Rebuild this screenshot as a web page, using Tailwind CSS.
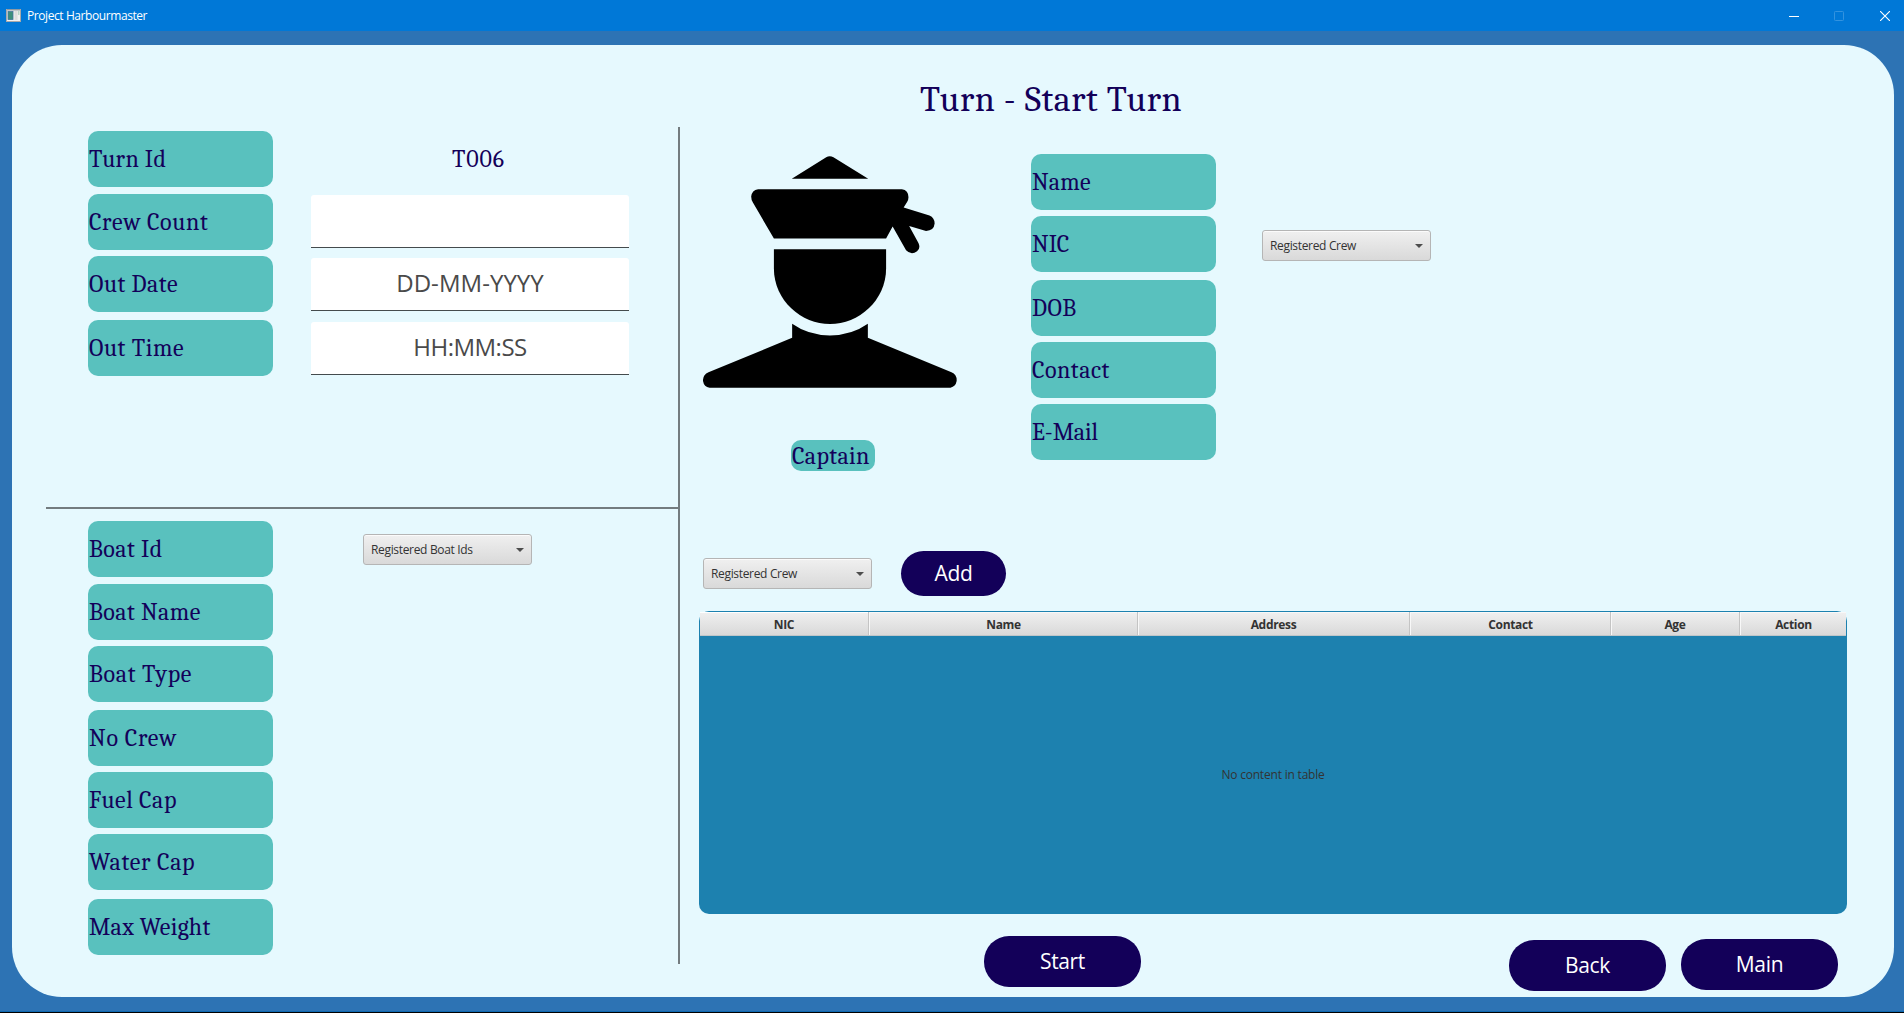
<!DOCTYPE html>
<html lang="en">
<head>
<meta charset="utf-8">
<title>Project Harbourmaster</title>
<script src="https://cdn.jsdelivr.net/npm/@tailwindcss/browser@4"></script>
</head>
<body class="w-[1904px] h-[1013px] overflow-hidden bg-black font-['Open_Sans',sans-serif] text-[#130059]">
<div class="h-[1012px] flex flex-col bg-[#2d73b4] border-b border-[#0f68b0]">
  <header class="h-[31px] shrink-0 bg-[#0078d7] flex items-center text-white">
    <svg class="ml-[6px] w-[15px] h-[13px]" viewBox="0 0 15 13"><rect x=".5" y=".5" width="14" height="12" fill="#f1f1f1" stroke="#a9a9a9"/><rect x="1" y="0" width="13" height="1.5" fill="#8f9aa3"/><rect x="2" y="2.5" width="5" height="8" fill="#3c8f7c" stroke="#44749b" stroke-width=".8"/><rect x="8.500" y="2" width="3" height="9" fill="#dedede"/><rect x="12" y="2" width="1.500" height="4" fill="#b9d6c6"/></svg>
    <span class="ml-[6px] text-[12px] leading-[16px] tracking-[-0.42px]">Project Harbourmaster</span>
    <div class="ml-auto flex items-center gap-[35px] mr-[14px]">
      <svg class="w-[10px] h-[10px]" viewBox="0 0 10 10"><path d="M0 5.500H10" stroke="#fff"/></svg>
      <svg class="w-[10px] h-[10px]" viewBox="0 0 10 10"><rect x=".5" y=".5" width="9" height="9" rx=".8" fill="none" stroke="#3393df"/></svg>
      <svg class="w-[10px] h-[10px] ml-[1px]" viewBox="0 0 10 10"><path d="M0 0L10 10M10 0L0 10" stroke="#fff" stroke-width="1.100"/></svg>
    </div>
  </header>

  <main class="mt-[14px] ml-[12px] w-[1882px] h-[952px] rounded-[50px] bg-[#e6f9fe] flex font-[Cambria,Caladea,'Liberation_Serif',serif] text-[24px] leading-[28px]">

    <section class="ml-[34px] mt-[82px] w-[634px] h-[837px] shrink-0 border-r-2 border-[#737c7f]">
      <div class="h-[382px] pl-[42px] pt-[4px] border-b-2 border-[#737c7f]">
        <div class="flex h-[56px] gap-[38px]">
          <div class="w-[185px] flex items-center rounded-[10px] bg-[#59c1be] pl-px tracking-[0.35px]">Turn Id</div>
          <div class="w-[318px] flex items-center justify-center pl-[17px] tracking-[0.9px]">T006</div>
        </div>
        <div class="flex h-[56px] gap-[38px] mt-[7px]">
          <div class="w-[185px] flex items-center rounded-[10px] bg-[#59c1be] pl-px tracking-[0.65px]">Crew Count</div>
          <div class="w-[318px] h-[53px] mt-px rounded-t-[3px] bg-white border-b border-[#444b4d]"></div>
        </div>
        <div class="flex h-[56px] gap-[38px] mt-[6px]">
          <div class="w-[185px] flex items-center rounded-[10px] bg-[#59c1be] pl-px tracking-[0.5px]">Out Date</div>
          <div class="w-[318px] h-[53px] mt-[2px] pb-[2px] rounded-t-[3px] bg-white border-b border-[#444b4d] flex items-center justify-center font-['Open_Sans',sans-serif] text-[#4a4a4a] tracking-[0.05px]">DD-MM-YYYY</div>
        </div>
        <div class="flex h-[56px] gap-[38px] mt-[8px]">
          <div class="w-[185px] flex items-center rounded-[10px] bg-[#59c1be] pl-px tracking-[0.55px]">Out Time</div>
          <div class="w-[318px] h-[53px] mt-[2px] pb-[2px] rounded-t-[3px] bg-white border-b border-[#444b4d] flex items-center justify-center font-['Open_Sans',sans-serif] text-[#4a4a4a] tracking-[-0.5px]">HH:MM:SS</div>
        </div>
      </div>
      <div class="pl-[42px] pt-[12px]">
        <div class="flex h-[56px]">
          <div class="w-[185px] flex items-center rounded-[10px] bg-[#59c1be] pl-px tracking-[0.45px]">Boat Id</div>
          <div class="ml-[90px] mt-[13px] w-[169px] h-[31px] rounded-[3px] border border-[#b5b5b5] bg-linear-to-b from-[#f0f0f0] to-[#d9d9d9] shadow-[inset_0_1px_0_#fbfbfb] flex items-center justify-between pl-[7px] pr-[7px] font-['Open_Sans',sans-serif] text-[12px] leading-[16px] tracking-[-0.33px] text-[#333]">Registered Boat Ids<svg class="w-[8px] h-[4px]" viewBox="0 0 8 4"><path d="M0 0H8L4 4Z" fill="#4d4d4d"/></svg></div>
        </div>
        <div class="w-[185px] h-[56px] mt-[7px] flex items-center rounded-[10px] bg-[#59c1be] pl-px tracking-[0.45px]">Boat Name</div>
        <div class="w-[185px] h-[56px] mt-[6px] flex items-center rounded-[10px] bg-[#59c1be] pl-px tracking-[0.65px]">Boat Type</div>
        <div class="w-[185px] h-[56px] mt-[8px] flex items-center rounded-[10px] bg-[#59c1be] pl-px tracking-[0.75px]">No Crew</div>
        <div class="w-[185px] h-[56px] mt-[6px] flex items-center rounded-[10px] bg-[#59c1be] pl-px tracking-[0.55px]">Fuel Cap</div>
        <div class="w-[185px] h-[56px] mt-[6px] flex items-center rounded-[10px] bg-[#59c1be] pl-px tracking-[0.65px]">Water Cap</div>
        <div class="w-[185px] h-[56px] mt-[9px] flex items-center rounded-[10px] bg-[#59c1be] pl-px tracking-[0.3px]">Max Weight</div>
      </div>
    </section>

    <section class="flex-1 flex flex-col">
      <h1 class="ml-[240px] mt-[31px] h-[48px] text-[36px] leading-[48px] whitespace-nowrap tracking-[0.55px]">Turn - Start Turn</h1>
      <div class="flex h-[401px] pt-[30px]">
        <div class="ml-[23px] w-[254px] flex flex-col">
          <svg class="mt-[2px] w-[254px] h-[232px]" viewBox="38 288 738 697" preserveAspectRatio="none">
            <path d="M296 356L396 292Q406 285 417 292L518 356Z"/>
            <path d="M198 388H616Q635 391 635 412Q635 420 631 426L621 443L696 467Q711 474 711 491Q709 513 686 513L637 498L664 549Q671 565 660 574Q643 587 628 571L589 500L570 536H244L183 428Q178 420 178 410Q180 391 198 388Z"/>
            <path d="M244 568H570V626C570 722 490 793 407 793C324 793 244 722 244 626Z"/>
            <path d="M297 792Q345 827 407 827Q469 827 517 792V834L760 938Q776 945 775 964Q772 981 757 984H57Q41 982 38 964Q37 946 54 938L297 834Z"/>
          </svg>
          <div class="ml-[88px] mt-[52px] w-[84px] h-[31px] rounded-[10px] bg-[#59c1be] pl-px tracking-[0.35px] flex items-center">Captain</div>
        </div>
        <div class="ml-[74px]">
          <div class="w-[185px] h-[56px] flex items-center rounded-[10px] bg-[#59c1be] pl-px tracking-[0.2px]">Name</div>
          <div class="flex h-[56px] mt-[6px]">
            <div class="w-[185px] flex items-center rounded-[10px] bg-[#59c1be] pl-px">NIC</div>
            <div class="ml-[46px] mt-[14px] w-[169px] h-[31px] rounded-[3px] border border-[#b5b5b5] bg-linear-to-b from-[#f0f0f0] to-[#d9d9d9] shadow-[inset_0_1px_0_#fbfbfb] flex items-center justify-between pl-[7px] pr-[7px] font-['Open_Sans',sans-serif] text-[12px] leading-[16px] tracking-[-0.33px] text-[#333]">Registered Crew<svg class="w-[8px] h-[4px]" viewBox="0 0 8 4"><path d="M0 0H8L4 4Z" fill="#4d4d4d"/></svg></div>
          </div>
          <div class="w-[185px] h-[56px] mt-[8px] flex items-center rounded-[10px] bg-[#59c1be] pl-px tracking-[0.4px]">DOB</div>
          <div class="w-[185px] h-[56px] mt-[6px] flex items-center rounded-[10px] bg-[#59c1be] pl-px tracking-[0.5px]">Contact</div>
          <div class="w-[185px] h-[56px] mt-[6px] flex items-center rounded-[10px] bg-[#59c1be] pl-px tracking-[-0.1px]">E-Mail</div>
        </div>
      </div>

      <div class="mt-[26px] ml-[23px] flex h-[45px] font-['Open_Sans',sans-serif]">
        <div class="mt-[7px] w-[169px] h-[31px] rounded-[3px] border border-[#b5b5b5] bg-linear-to-b from-[#f0f0f0] to-[#d9d9d9] shadow-[inset_0_1px_0_#fbfbfb] flex items-center justify-between pl-[7px] pr-[7px] text-[12px] leading-[16px] tracking-[-0.33px] text-[#333]">Registered Crew<svg class="w-[8px] h-[4px]" viewBox="0 0 8 4"><path d="M0 0H8L4 4Z" fill="#4d4d4d"/></svg></div>
        <button class="ml-[29px] w-[105px] h-[45px] pb-[2px] rounded-[23px] bg-[#130059] text-white text-[21px] tracking-[-0.3px]">Add</button>
      </div>

      <div class="mt-[15px] ml-[19px] w-[1148px] h-[303px] rounded-[10px] bg-[#1d81af] flex flex-col p-px font-['Open_Sans',sans-serif] text-[12px] leading-[16px] text-[#333]">
        <div class="h-[24px] shrink-0 flex text-center font-bold leading-[25px] tracking-[-0.33px] border-b border-[#bfc6c9]">
          <div class="w-[169px] bg-linear-to-b from-[#f0f0f0] to-[#d9d9d9] border-r border-[#c4c4c4] shadow-[inset_0_1px_0_#fff]">NIC</div>
          <div class="w-[269px] bg-linear-to-b from-[#f0f0f0] to-[#d9d9d9] border-r border-[#c4c4c4] shadow-[inset_1px_1px_0_#f8f8f8] pl-px">Name</div>
          <div class="w-[272px] bg-linear-to-b from-[#f0f0f0] to-[#d9d9d9] border-r border-[#c4c4c4] shadow-[inset_1px_1px_0_#f8f8f8]">Address</div>
          <div class="w-[201px] bg-linear-to-b from-[#f0f0f0] to-[#d9d9d9] border-r border-[#c4c4c4] shadow-[inset_1px_1px_0_#f8f8f8] pl-px">Contact</div>
          <div class="w-[129px] bg-linear-to-b from-[#f0f0f0] to-[#d9d9d9] border-r border-[#c4c4c4] shadow-[inset_1px_1px_0_#f8f8f8]">Age</div>
          <div class="flex-1 bg-linear-to-b from-[#f0f0f0] to-[#d9d9d9] shadow-[inset_1px_1px_0_#f8f8f8] pl-px">Action</div>
        </div>
        <div class="flex-1 flex items-center justify-center tracking-[-0.2px]">No content in table</div>
      </div>

      <div class="mt-[22px] ml-[304px] flex h-[55px] font-['Open_Sans',sans-serif] text-white text-[21px] tracking-[-0.35px]">
        <button class="w-[157px] h-[51px] pb-px rounded-[25px] bg-[#130059]">Start</button>
        <button class="ml-[368px] mt-[4px] w-[157px] h-[51px] pb-px rounded-[25px] bg-[#130059]">Back</button>
        <button class="ml-[15px] mt-[3px] w-[157px] h-[51px] pb-px rounded-[25px] bg-[#130059]">Main</button>
      </div>
    </section>
  </main>
</div>
</body>
</html>
